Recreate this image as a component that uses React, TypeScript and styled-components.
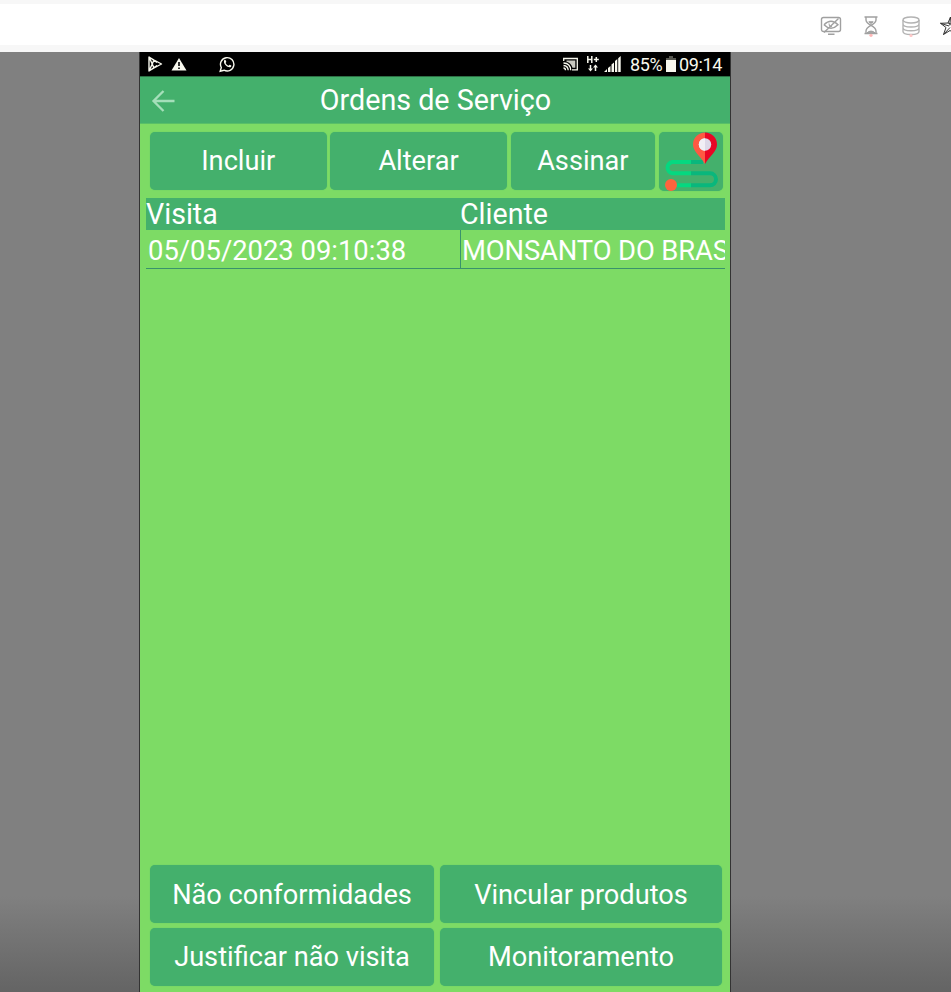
import React from "react";
import styled, { createGlobalStyle } from "styled-components";

const GREEN = "#44b06c";
const LIME = "#7ddb65";

const GlobalStyle = createGlobalStyle`
  * { box-sizing: border-box; }
  body { margin: 0; overflow: hidden; }
`;

const Page = styled.div`
  width: 951px;
  height: 992px;
  display: flex;
  flex-direction: column;
  overflow: hidden;
  font-family: Roboto, "Liberation Sans", sans-serif;
`;

const BrowserBar = styled.header`
  height: 52px;
  flex: none;
  display: flex;
  justify-content: flex-end;
  align-items: center;
  gap: 18px;
  padding-top: 2px;
  background: #fff;
  border-top: 4px solid #f7f7f7;
  border-bottom: 7px solid #f7f7f7;
  overflow: hidden;
`;

const ToolIcon = styled.svg`
  width: 22px;
  height: 22px;
  flex: none;
  fill: none;
  stroke: #a0a0a0;
  stroke-width: 1.4;
`;

const StarIcon = styled(ToolIcon)`
  stroke: #333;
  stroke-width: 1;
  margin: 0 -11px 2px 0;
`;

const Stage = styled.main`
  flex: 1;
  min-height: 0;
  display: flex;
  padding-left: 139px;
  background: linear-gradient(#808080 0 844px, #646464 940px);
`;

const Phone = styled.section`
  width: 592px;
  height: 940px;
  display: flex;
  flex-direction: column;
  border: solid #333;
  border-width: 0 1px;
  background: ${LIME};
  color: #fff;
`;

const StatusBar = styled.div`
  height: 24px;
  flex: none;
  display: flex;
  align-items: center;
  justify-content: space-between;
  padding: 0 8px 0 7px;
  background: #000;
  color: #f8f8ee;
  font-size: 18px;
  line-height: 24px;
`;

const StatusGroup = styled.div`
  display: flex;
  align-items: center;
  height: 24px;
`;

const StatusIcon = styled.svg<{ $w: number; $gap?: number }>`
  width: ${(p) => p.$w}px;
  height: 18px;
  margin-right: ${(p) => p.$gap ?? 0}px;
  flex: none;
`;

const StatusText = styled.span<{ $w: number; $gap?: number }>`
  width: ${(p) => p.$w}px;
  margin-right: ${(p) => p.$gap ?? 0}px;
  white-space: nowrap;
  padding-top: 2px;
  letter-spacing: -0.35px;
`;

const TitleBar = styled.div`
  height: 48px;
  flex: none;
  display: grid;
  grid-template-columns: 48px 1fr 48px;
  align-items: center;
  background: ${GREEN};
  border-top: 1px solid #2d7045;
  border-bottom: 1px solid #58bf68;
`;

const BackIcon = styled.svg`
  width: 24px;
  height: 24px;
  margin: 1px 0 0 11px;
  fill: none;
  stroke: #a5dfba;
  stroke-width: 2.3;
`;

const Title = styled.h1`
  margin: 0;
  padding-left: 1px;
  font-size: 28.7px;
  font-weight: 400;
  line-height: 46px;
  text-align: center;
  white-space: nowrap;
`;

const ActionRow = styled.div`
  display: grid;
  grid-template-columns: 176.5px 176.5px 144.5px 64px;
  column-gap: 3.8px;
  margin: 8px 6px 0 10px;
  height: 66px;
  flex: none;
`;

const Button = styled.button<{ $textTop?: number }>`
  height: 58px;
  padding: ${(p) => p.$textTop ?? 0}px 0 0;
  overflow: hidden;
  border: 0;
  border-radius: 5px;
  background: ${GREEN};
  box-shadow: 0 0 1px #4fbd68;
  color: #fff;
  font: 400 27.2px/57px Roboto, "Liberation Sans", sans-serif;
  text-align: center;
  white-space: nowrap;
`;

const RouteButton = styled(Button)`
  height: 59px;
  display: flex;
  svg { width: 64px; height: 59px; flex: none; }
`;

const Table = styled.div`
  width: 579px;
  margin-left: 6px;
  flex: 1;
  font-size: 27.4px;
`;

const HeadRow = styled.div`
  display: grid;
  grid-template-columns: 314px 265px;
  height: 32px;
  line-height: 32px;
  background: ${GREEN};
  font-size: 28.6px;
`;

const DataRow = styled.div`
  display: grid;
  grid-template-columns: 314px 265px;
  height: 39px;
  line-height: 42px;
  border-bottom: 1px solid #39936c;
`;

const Cell = styled.div<{ $divided?: boolean }>`
  overflow: hidden;
  white-space: nowrap;
  padding-left: ${(p) => (p.$divided ? "1px" : "2px")};
  border-left: ${(p) => (p.$divided ? "1px solid #39936c" : "0")};
  letter-spacing: ${(p) => (p.$divided ? "-0.12px" : "0")};
`;

const Footer = styled.div`
  display: grid;
  grid-template-columns: 284px 282px;
  column-gap: 6px;
  row-gap: 4.5px;
  margin: 0 8px 6.2px 10px;
  flex: none;
`;

const App = () => (
  <Page>
    <GlobalStyle />
    <BrowserBar>
      <ToolIcon viewBox="0 0 22 22">
        <rect x="1.5" y="2.5" width="19" height="14" rx="2" />
        <path d="M8 19.300h6.500M4 9.800q7-7 14 0q-7 7-14 0M4 17.500 18.500 3.500" />
        <path d="M9 8.500q-.5 3.500 3 3" strokeWidth="1" />
      </ToolIcon>
      <ToolIcon viewBox="0 0 22 22">
        <path d="M4.500 2h13M4.500 18.500h13M6 2.500v2.500q0 2.500 5 5.300q5-2.800 5-5.300V2.500M6 18v-2q0-3 5-5.700q5 2.700 5 5.700v2" />
        <path d="M7 17.800q4-3.500 8 0zM8.800 6.800h4.400L11 8.500z" fill="#a0a0a0" strokeWidth="1" />
        <circle cx="11" cy="20.300" r="1.600" fill="#ffb7b7" stroke="none" />
      </ToolIcon>
      <ToolIcon viewBox="0 0 22 22">
        <g stroke="#b3b3b3">
          <ellipse cx="11" cy="5" rx="8" ry="3" />
          <path d="M3 5v11.500c0 4 16 4 16 0V5M3 9c0 4 16 4 16 0M3 12.800c0 4 16 4 16 0" />
        </g>
        <circle cx="11" cy="20.500" r="1.600" fill="#ffc9c9" stroke="none" />
      </ToolIcon>
      <StarIcon viewBox="0 0 22 22">
        <path d="M10.500 3 8 9 .500 9.300 6 13.500 3.500 20.500 10 16.500 16 20.500 14 13.500 20 9.300 12.500 9zM10.500 3 9.800 11.500M.500 9.300 9 12M3.500 20.500 10 13.500M16 20.500 11.500 13M8 9l4 1.500" />
      </StarIcon>
    </BrowserBar>
    <Stage>
      <Phone>
        <StatusBar>
          <StatusGroup>
            <StatusIcon $w={16} $gap={8} viewBox="0 0 16 18" fill="none" stroke="#f8f8ee" strokeWidth="1.4" strokeLinejoin="round">
              <path d="M2 2v14l5-3 7.500-4L7 5zM2 2l8 5.500M2 16l8-5.500M2.500 15 7 5M2.500 3 7 13" />
            </StatusIcon>
            <StatusIcon $w={16} $gap={32} viewBox="0 0 16 18">
              <path d="M8 3 15.500 15.500H.5z" fill="#f8f8ee" />
              <path d="M8 7v4M8 12.500v1.500" stroke="#000" strokeWidth="1.6" />
            </StatusIcon>
            <StatusIcon $w={16} viewBox="0 0 16 18">
              <path d="M1.200 16.200 2.300 12.500A6.700 6.700 0 1 1 5 15.200z" fill="none" stroke="#f8f8ee" strokeWidth="1.4" />
              <path d="M5.200 5.300c1-1 1.500-.3 2.100 1.500.1.500-.8 1-.6 1.400.6 1.100 1.500 2 2.700 2.500.5.100.9-1.100 1.300-1 2 .8 2 .9 1.300 2-1.700 2.200-8.500-2.200-6.800-6.400" fill="#f8f8ee" />
            </StatusIcon>
          </StatusGroup>
          <StatusGroup>
            <StatusIcon $w={16} $gap={8} viewBox="0 0 16 18" fill="none" stroke="#f8f8ee" strokeWidth="1.3">
              <path d="M1.700 6V3.500h13.600v11.300H10M1.500 13q2 0 2 2.300M1.500 10.500q4.500.3 4.700 4.800M1.500 8q7 .3 7.200 7.300" />
              <path d="M4.500 5.500h8.800v7.300H10.500Q9 7.500 4.500 6.700z" fill="#c9c9c0" stroke="none" />
            </StatusIcon>
            <StatusIcon $w={13} $gap={5} viewBox="0 0 13 18">
              <path d="M1.800 1v7M5.800 1v7M1.800 4.500h4M7.800 4.500h5M10.300 2v5M4.500 10v5M9.500 10.500V16" fill="none" stroke="#f8f8ee" strokeWidth="1.500" />
              <path d="M2 13.500h5l-2.500 3zM7 12.500h5l-2.500-3z" fill="#f8f8ee" />
            </StatusIcon>
            <StatusIcon $w={17} $gap={9} viewBox="0 0 17 18" fill="#f8f8ee">
              <path d="M0 17l3-3v3zM4 13l2.500-2v6H4zM7.500 9.500l2.500-2V17H7.500zM11 6l2.300-2V17H11zM14.200 3.200 16.700 1v16h-2.500z" />
            </StatusIcon>
            <StatusText $w={32} $gap={4}>85%</StatusText>
            <StatusIcon $w={10} $gap={3} viewBox="0 0 10 18">
              <path d="M3 1h4v2h3v3H0V3h3z" fill="#55554e" />
              <path d="M0 5h10v12H0z" fill="#f8f8ee" />
            </StatusIcon>
            <StatusText $w={43}>09:14</StatusText>
          </StatusGroup>
        </StatusBar>
        <TitleBar>
          <BackIcon viewBox="0 0 24 24"><path d="M23.500 12H3M12.500 2 2.500 12l10 10" /></BackIcon>
          <Title>Ordens de Serviço</Title>
        </TitleBar>
        <ActionRow>
          <Button $textTop={1}>Incluir</Button>
          <Button $textTop={1}>Alterar</Button>
          <Button $textTop={1}>Assinar</Button>
          <RouteButton aria-label="Rota">
            <svg viewBox="0 0 64 59" fill="none" strokeWidth="4">
              <path d="M32 30H13.500a5.700 5.700 0 0 0 0 11.300H32M14 53.300h18" stroke="#05d880" />
              <path d="M32 30h12M32 41.300h19a6 6 0 0 1 0 12H32" stroke="#09b77c" />
              <circle cx="12" cy="53" r="6" fill="#ff633d" />
              <path d="M46 .5a12 12 0 0 0-12 12c0 7 7 11 12 19.500z" fill="#ff5842" />
              <path d="M46 .5a12 12 0 0 1 12 12c0 7-7 11-12 19.500z" fill="#e90625" />
              <circle cx="46" cy="12.500" r="6.200" fill="#ddd9e8" />
              <path d="M46 6.300a6.200 6.200 0 0 0 0 12.400z" fill="#f1eff5" />
            </svg>
          </RouteButton>
        </ActionRow>
        <Table>
          <HeadRow><span>Visita</span><span>Cliente</span></HeadRow>
          <DataRow>
            <Cell>05/05/2023 09:10:38</Cell>
            <Cell $divided>MONSANTO DO BRAS</Cell>
          </DataRow>
        </Table>
        <Footer>
          <Button $textTop={2}>Não conformidades</Button>
          <Button $textTop={2}>Vincular produtos</Button>
          <Button $textTop={1}>Justificar não visita</Button>
          <Button $textTop={1}>Monitoramento</Button>
        </Footer>
      </Phone>
    </Stage>
  </Page>
);

export default App;
